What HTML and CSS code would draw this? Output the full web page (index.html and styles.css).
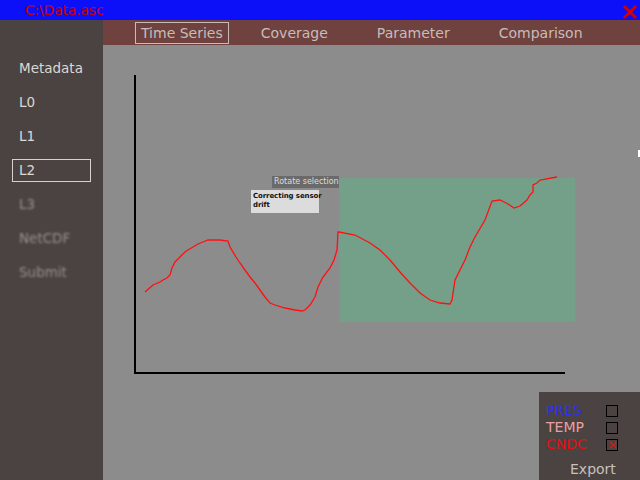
FILE: index.html
```html
<!DOCTYPE html>
<html>
<head>
<meta charset="utf-8">
<link rel="stylesheet" href="styles.css">
</head>
<body>
<div class="app">
  <div class="titlebar">
    <span class="title">C:\Data.asc</span>
    <svg class="close" width="16" height="16" viewBox="0 0 16 16"><path d="M2 2 L14 14 M14 2 L2 14" stroke="#d00000" stroke-width="3" fill="none"/></svg>
  </div>
  <div class="body">
    <nav class="sidebar">
      <div class="item">Metadata</div>
      <div class="item">L0</div>
      <div class="item">L1</div>
      <div class="item selected">L2</div>
      <div class="item blurred">L3</div>
      <div class="item blurred">NetCDF</div>
      <div class="item blurred">Submit</div>
    </nav>
    <div class="content">
      <div class="tabs">
        <div class="tab active">Time Series</div>
        <div class="tab">Coverage</div>
        <div class="tab">Parameter</div>
        <div class="tab">Comparison</div>
      </div>
      <div class="canvas">
        <svg class="chart" width="537" height="435" viewBox="103 45 537 435">
          <rect x="339" y="178" width="236" height="144" fill="#74a08a"/>
          <path d="M135 75 V373 H565" stroke="#000" stroke-width="2" fill="none"/>
          <polyline fill="none" stroke="#ff1010" stroke-width="1.3" points="145,292 153,285 160,282 163,280 167,278 170,275 172,268 175,262 180,257 185,252 188,250 193,247 198,244 203,242 208,240 220,240 228,241 230,247 236,257 240,263 245,270 250,277 255,283 260,290 265,297 270,303 275,305 285,308 295,310 302,311 305,310 310,305 315,297 318,287 323,277 330,268 334,260 337,250 338,232 339,232 355,235 370,243 380,250 390,260 400,272 410,283 420,293 430,300 440,303 450,304 452,300 455,280 465,260 470,247 475,237 485,220 492,201 500,200 508,204 514,208 520,206 527,200 530,195 533,192 533,185 537,183 540,180 557,177"/>
          <rect x="638" y="150" width="2" height="7" fill="#fff"/>
        </svg>
        <div class="rotate">Rotate selection</div>
        <div class="tooltip">Correcting sensor<br>drift</div>
        <div class="legend">
          <div class="row"><span class="name pres">PRES</span><span class="box"></span></div>
          <div class="row"><span class="name temp">TEMP</span><span class="box"></span></div>
          <div class="row"><span class="name cndc">CNDC</span><span class="box checked">×</span></div>
          <div class="export">Export</div>
        </div>
      </div>
    </div>
  </div>
</div>
</body>
</html>
```
FILE: styles.css
```css
* { box-sizing: border-box; }
html, body { margin: 0; padding: 0; }
body {
  width: 640px;
  height: 480px;
  overflow: hidden;
  font-family: "DejaVu Sans", "Liberation Sans", sans-serif;
}
.app { width: 640px; height: 480px; display: flex; flex-direction: column; }
.titlebar {
  height: 20px;
  background: #0c10f8;
  display: flex;
  align-items: center;
  justify-content: space-between;
  padding: 0 2px 0 25px;
}
.title { color: #c80000; font-size: 14px; letter-spacing: -0.2px; }
.close { display: block; margin-top: 3px; }
.body { flex: 1; display: flex; }
.sidebar {
  width: 103px;
  background: #4b4341;
  padding-top: 37px;
  display: flex;
  flex-direction: column;
}
.item {
  color: #ddd8d4;
  font-size: 13.5px;
  height: 23px;
  line-height: 21px;
  margin: 0 12px 11px 12px;
  padding-left: 6px;
  border: 1px solid transparent;
}
.item.selected { border-color: #d8d0cc; }
.item.blurred { color: #979090; filter: blur(1.2px); }
.content { flex: 1; display: flex; flex-direction: column; }
.tabs {
  height: 25px;
  background: #6f423f;
  display: flex;
  align-items: center;
  padding-left: 32px;
}
.tab {
  color: #c8bcb8;
  font-size: 14px;
  height: 22px;
  line-height: 20px;
  padding: 0 5px;
  border: 1px solid transparent;
  margin-right: 37px;
}
.tab.active { border-color: #c8bcb8; margin-right: 26px; }
.canvas { flex: 1; background: #8c8c8c; position: relative; }
.chart { display: block; }
.rotate {
  position: absolute;
  left: 169px;
  top: 131px;
  width: 67px;
  height: 12px;
  background: #6a6a6a;
  color: #dcdcdc;
  font-size: 8px;
  line-height: 12px;
  padding-left: 2px;
  white-space: nowrap;
}
.tooltip {
  position: absolute;
  left: 148px;
  top: 145px;
  width: 68px;
  height: 23px;
  background: #dcdcdc;
  color: #111;
  font-size: 7px;
  font-weight: bold;
  line-height: 9px;
  padding: 2px 0 0 2px;
  white-space: nowrap;
  letter-spacing: -0.1px;
}
.legend {
  position: absolute;
  right: 0;
  bottom: 0;
  width: 101px;
  height: 88px;
  background: #4b4341;
  padding: 10px 0 0 7px;
}
.row {
  display: flex;
  align-items: center;
  justify-content: space-between;
  height: 17px;
  padding-right: 22px;
}
.name { font-size: 14px; line-height: 17px; }
.pres { color: #3030f0; }
.temp { color: #e8a0a0; }
.cndc { color: #e01010; }
.box {
  width: 12px;
  height: 12px;
  border: 1px solid #000;
  color: #e01010;
  font-size: 13px;
  line-height: 9px;
  text-align: center;
}
.export {
  color: #c8c0bc;
  font-size: 14px;
  margin-top: 8px;
  padding-left: 24px;
}
```
